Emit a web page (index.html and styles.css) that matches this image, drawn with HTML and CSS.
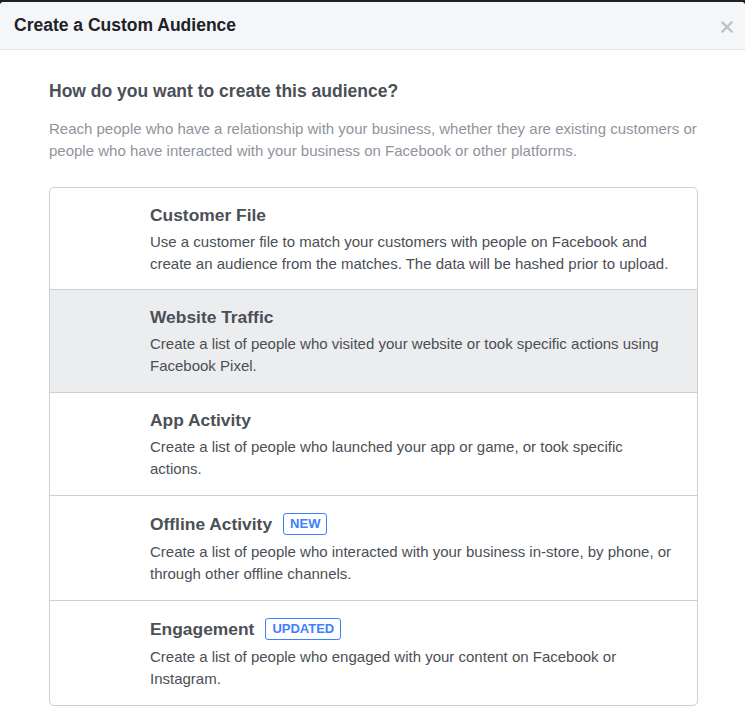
FILE: index.html
```html
<!DOCTYPE html>
<html lang="en">
<head>
<meta charset="utf-8">
<title>Create a Custom Audience</title>
<link rel="stylesheet" href="styles.css">
</head>
<body>
<div class="page">
  <div class="dialog">
    <div class="dialog-header">
      <h1 class="dialog-title">Create a Custom Audience</h1>
      <span class="close" aria-label="Close"><svg width="12" height="12" viewBox="0 0 12 12"><path d="M1.5 1.5L10.5 10.5M10.5 1.5L1.5 10.5" stroke="#bec2c9" stroke-width="2.4" stroke-linecap="square"/></svg></span>
    </div>
    <div class="dialog-body">
      <h2 class="question">How do you want to create this audience?</h2>
      <p class="intro">Reach people who have a relationship with your business, whether they are existing customers or people who have interacted with your business on Facebook or other platforms.</p>
      <ul class="options">
        <li class="option">
          <div class="option-icon"></div>
          <div class="option-text">
            <div class="option-title">Customer File</div>
            <div class="option-desc">Use a customer file to match your customers with people on Facebook and create an audience from the matches. The data will be hashed prior to upload.</div>
          </div>
        </li>
        <li class="option is-hover">
          <div class="option-icon"></div>
          <div class="option-text">
            <div class="option-title">Website Traffic</div>
            <div class="option-desc">Create a list of people who visited your website or took specific actions using Facebook Pixel.</div>
          </div>
        </li>
        <li class="option">
          <div class="option-icon"></div>
          <div class="option-text">
            <div class="option-title">App Activity</div>
            <div class="option-desc">Create a list of people who launched your app or game, or took specific actions.</div>
          </div>
        </li>
        <li class="option">
          <div class="option-icon"></div>
          <div class="option-text">
            <div class="option-title">Offline Activity <span class="badge">NEW</span></div>
            <div class="option-desc">Create a list of people who interacted with your business in-store, by phone, or through other offline channels.</div>
          </div>
        </li>
        <li class="option">
          <div class="option-icon"></div>
          <div class="option-text">
            <div class="option-title">Engagement <span class="badge">UPDATED</span></div>
            <div class="option-desc">Create a list of people who engaged with your content on Facebook or Instagram.</div>
          </div>
        </li>
      </ul>
    </div>
  </div>
</div>
</body>
</html>
```

FILE: styles.css
```css
* { box-sizing: border-box; }
html, body { margin: 0; padding: 0; }
body {
  font-family: "Liberation Sans", Arial, Helvetica, sans-serif;
  background: #ffffff;
  color: #4b4f56;
}
.page {
  background: #1c2027;
  padding-top: 2px;
  min-height: 713px;
}
.dialog {
  background: #ffffff;
  border-radius: 4px 4px 0 0;
  min-height: 711px;
  overflow: hidden;
}
.dialog-header {
  height: 48px;
  background: #f5f6f7;
  border-bottom: 1px solid #e5e5e5;
  display: flex;
  align-items: center;
  justify-content: space-between;
  padding: 0 12px 0 14px;
}
.dialog-title {
  margin: 0;
  font-size: 17.5px;
  font-weight: bold;
  color: #1d2129;
}
.close {
  display: flex;
  margin-top: 3px;
}
.dialog-body {
  padding: 31px 47px 0 49px;
}
.question {
  margin: 0;
  font-size: 17.5px;
  font-weight: bold;
  color: #4b4f56;
  line-height: 20px;
}
.intro {
  margin: 17px 0 0;
  font-size: 15px;
  line-height: 22px;
  color: #90949c;
}
.options {
  list-style: none;
  margin: 25px 0 0;
  padding: 0;
  border: 1px solid #ccd0d5;
  border-radius: 5px;
  overflow: hidden;
}
.option {
  display: flex;
  padding: 17px 22px 15px 0;
  border-top: 1px solid #ccd0d5;
}
.option:first-child {
  border-top: none;
  padding-bottom: 14px;
}
.option.is-hover { background: #ecedee; }
.option-icon {
  width: 100px;
  flex: none;
}
.option-title {
  font-size: 17.4px;
  font-weight: bold;
  line-height: 20px;
  color: #4b4f56;
  display: flex;
  align-items: center;
  gap: 11px;
}
.option-desc {
  margin-top: 6px;
  font-size: 15px;
  line-height: 22px;
  color: #4b4f56;
}
.badge {
  display: inline-block;
  border: 1px solid #4080ff;
  border-radius: 3px;
  color: #4080ff;
  font-size: 13px;
  font-weight: bold;
  line-height: 20px;
  padding: 0 6px;
}
```
